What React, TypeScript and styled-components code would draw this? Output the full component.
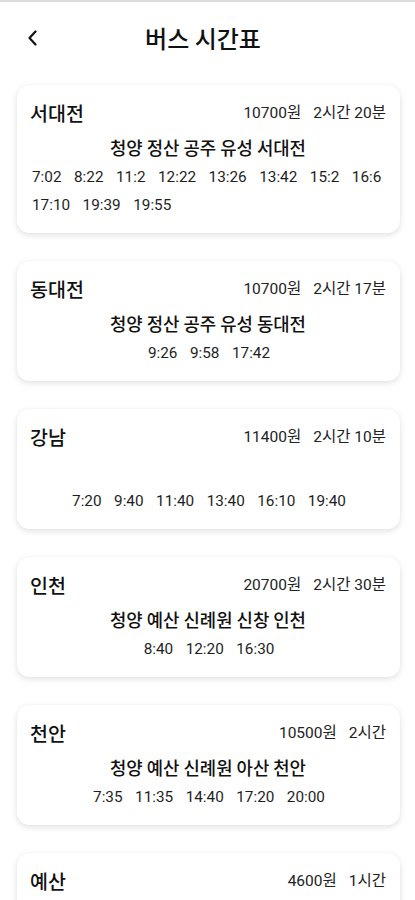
import React from "react";
import styled, { createGlobalStyle } from "styled-components";

const GlobalStyle = createGlobalStyle`
  html, body {
    margin: 0;
    padding: 0;
    background: #ffffff;
  }
  body {
    font-family: Roboto, "Noto Sans CJK KR", "Noto Sans", sans-serif;
    color: #111111;
  }
`;

const Page = styled.div`
  border-top: 2px solid #dcdcdc;
  background: #ffffff;
  min-height: 900px;
`;

const Header = styled.header`
  height: 71px;
  display: grid;
  grid-template-columns: 1fr auto 1fr;
  align-items: center;
  padding-right: 9px;
`;

const BackButton = styled.button`
  justify-self: start;
  border: none;
  background: none;
  padding: 0 0 0 27px;
  height: 32px;
  display: flex;
  align-items: center;
  cursor: pointer;
`;

const Title = styled.h1`
  margin: 0;
  font-family: "Noto Sans CJK KR", sans-serif;
  font-size: 24px;
  font-weight: 500;
  color: #111111;
`;

const List = styled.main`
  display: flex;
  flex-direction: column;
  gap: 28px;
  padding: 12px 15px 40px 17px;
`;

const Card = styled.section`
  background: #ffffff;
  border-radius: 12px;
  box-shadow: 0 2px 6px rgba(0, 0, 0, 0.12), 0 0 1px rgba(0, 0, 0, 0.08);
  padding: 14px 14px 15px 13px;
`;

const CardTop = styled.div`
  display: flex;
  align-items: center;
  justify-content: space-between;
  height: 28px;
`;

const Destination = styled.h2`
  margin: 0;
  font-family: "Noto Sans CJK KR", sans-serif;
  font-size: 19.5px;
  font-weight: 500;
  line-height: 28px;
  color: #111111;
`;

const Meta = styled.div`
  display: flex;
  gap: 12px;
  font-size: 15.5px;
  color: #222222;
  line-height: 20px;
`;

const Route = styled.div`
  margin-top: 8px;
  height: 24px;
  line-height: 24px;
  text-align: center;
  font-family: "Noto Sans CJK KR", sans-serif;
  font-size: 17.8px;
  font-weight: 500;
  color: #111111;
`;

const Times = styled.div`
  margin: 5px auto 0;
  width: fit-content;
  max-width: 100%;
  display: flex;
  flex-wrap: wrap;
  column-gap: 12.5px;
  row-gap: 2px;
  padding-left: 2px;
`;

const Time = styled.span`
  font-size: 15.3px;
  line-height: 26px;
  color: #1e1e1e;
`;

type Bus = {
  dest: string;
  price: string;
  duration: string;
  route: string;
  times: string[];
};

const buses: Bus[] = [
  {
    dest: "서대전",
    price: "10700원",
    duration: "2시간 20분",
    route: "청양 정산 공주 유성 서대전",
    times: ["7:02", "8:22", "11:2", "12:22", "13:26", "13:42", "15:2", "16:6", "17:10", "19:39", "19:55"],
  },
  {
    dest: "동대전",
    price: "10700원",
    duration: "2시간 17분",
    route: "청양 정산 공주 유성 동대전",
    times: ["9:26", "9:58", "17:42"],
  },
  {
    dest: "강남",
    price: "11400원",
    duration: "2시간 10분",
    route: "",
    times: ["7:20", "9:40", "11:40", "13:40", "16:10", "19:40"],
  },
  {
    dest: "인천",
    price: "20700원",
    duration: "2시간 30분",
    route: "청양 예산 신례원 신창 인천",
    times: ["8:40", "12:20", "16:30"],
  },
  {
    dest: "천안",
    price: "10500원",
    duration: "2시간",
    route: "청양 예산 신례원 아산 천안",
    times: ["7:35", "11:35", "14:40", "17:20", "20:00"],
  },
  {
    dest: "예산",
    price: "4600원",
    duration: "1시간",
    route: "청양 예산",
    times: ["7:00", "9:30", "12:00", "15:30", "18:00"],
  },
];

const Chevron = () => (
  <svg width="11" height="16" viewBox="0 0 11 16" fill="none">
    <polyline
      points="8.5,1.5 2.5,8 8.5,14.5"
      stroke="#111111"
      strokeWidth="2.2"
      strokeLinecap="round"
      strokeLinejoin="round"
    />
  </svg>
);

export default function App() {
  return (
    <>
      <GlobalStyle />
      <Page>
        <Header>
          <BackButton aria-label="뒤로">
            <Chevron />
          </BackButton>
          <Title>버스 시간표</Title>
          <span />
        </Header>
        <List>
          {buses.map((b) => (
            <Card key={b.dest}>
              <CardTop>
                <Destination>{b.dest}</Destination>
                <Meta>
                  <span>{b.price}</span>
                  <span>{b.duration}</span>
                </Meta>
              </CardTop>
              <Route>{b.route}</Route>
              <Times>
                {b.times.map((t, i) => (
                  <Time key={i}>{t}</Time>
                ))}
              </Times>
            </Card>
          ))}
        </List>
      </Page>
    </>
  );
}
